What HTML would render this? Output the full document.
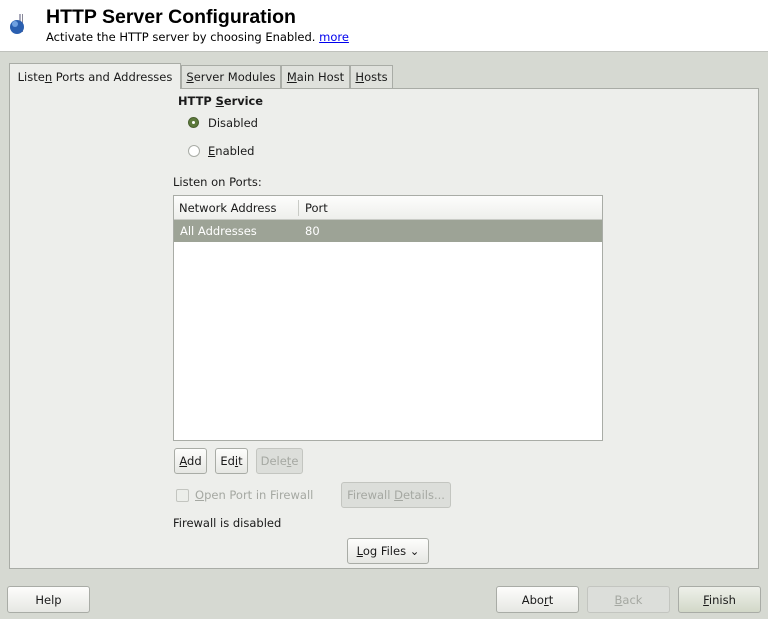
<!DOCTYPE html><html><head><style>
body{margin:0;width:768px;height:619px;background:#d6d9d2;font-family:"DejaVu Sans",sans-serif;font-size:11.5px;color:#1a1a1a;position:relative;overflow:hidden}
.a{position:absolute}
u{text-decoration:underline}
.btn{position:absolute;border:1px solid #a9aca6;border-radius:3px;background:linear-gradient(#fdfdfc,#e6e7e3);text-align:center;box-sizing:border-box;line-height:24px;font-size:11.5px}
.dis{color:#a5a8a2;background:#dcdeda;border-color:#c3c5c0}
.tab{position:absolute;top:65px;height:23px;border:1px solid #a9aca6;border-bottom:none;background:#dfe1dc;box-sizing:border-box;line-height:22px;text-align:center;font-size:11.5px;white-space:nowrap}
</style></head><body>
<div class="a" style="left:0;top:0;width:768px;height:51px;background:#fff;border-bottom:1px solid #bfc1bc"></div>
<svg class="a" style="left:8px;top:12px" width="20" height="24"><rect x="11" y="2" width="2" height="18" fill="#aab"/><rect x="14" y="2" width="1" height="18" fill="#889"/><circle cx="9" cy="15" r="7" fill="#2a5fb0"/><circle cx="7" cy="12" r="3" fill="#6fa0e0"/></svg>
<div class="a" style="left:46px;top:6px;font-family:'Liberation Sans',sans-serif;font-size:19.5px;font-weight:bold;color:#000">HTTP Server Configuration</div>
<div class="a" style="left:46px;top:30px;color:#000;white-space:nowrap">Activate the HTTP server by choosing Enabled. <span style="color:#00e;text-decoration:underline">more</span></div>
<div class="a" style="left:9px;top:88px;width:750px;height:481px;box-sizing:border-box;border:1px solid #a9aca6;background:#edeeeb"></div>
<div class="tab" style="left:9px;width:172px;top:63px;height:26px;background:#edeeeb;line-height:26px">Liste<u>n</u> Ports and Addresses</div>
<div class="tab" style="left:181px;width:100px"><u>S</u>erver Modules</div>
<div class="tab" style="left:281px;width:69px"><u>M</u>ain Host</div>
<div class="tab" style="left:350px;width:43px"><u>H</u>osts</div>
<div class="a" style="left:178px;top:94px;font-weight:bold;font-size:11.4px;white-space:nowrap">HTTP <u>S</u>ervice</div>
<div class="a" style="left:188px;top:117px;width:11px;height:11px;border-radius:50%;background:#5d7a3c;border:1px solid #4a6030;box-sizing:border-box"><div style="margin:3px;width:3px;height:3px;border-radius:50%;background:#fff"></div></div>
<div class="a" style="left:208px;top:116px">Disabled</div>
<div class="a" style="left:188px;top:145px;width:12px;height:12px;border-radius:50%;background:#fff;border:1px solid #a9aca6;box-sizing:border-box"></div>
<div class="a" style="left:208px;top:144px"><u>E</u>nabled</div>
<div class="a" style="left:173px;top:175px">Listen on Ports:</div>
<div class="a" style="left:173px;top:195px;width:430px;height:246px;box-sizing:border-box;border:1px solid #a9aca6;background:#fff"></div>
<div class="a" style="left:174px;top:196px;width:428px;height:23px;background:linear-gradient(#fdfdfc,#eeefec);border-bottom:1px solid #c9cbc6"></div>
<div class="a" style="left:298px;top:200px;width:1px;height:16px;background:#c9cbc6"></div>
<div class="a" style="left:179px;top:201px">Network Address</div>
<div class="a" style="left:305px;top:201px">Port</div>
<div class="a" style="left:174px;top:220px;width:428px;height:22px;background:#9da396"></div>
<div class="a" style="left:180px;top:224px;color:#fff">All Addresses</div>
<div class="a" style="left:305px;top:224px;color:#fff">80</div>
<div class="btn" style="left:174px;top:448px;width:33px;height:26px"><u>A</u>dd</div>
<div class="btn" style="left:215px;top:448px;width:33px;height:26px">Ed<u>i</u>t</div>
<div class="btn dis" style="left:256px;top:448px;width:47px;height:26px">Dele<u>t</u>e</div>
<div class="a" style="left:176px;top:489px;width:11px;height:11px;border:1px solid #c3c5c0;border-radius:2px;background:#eceeea"></div>
<div class="a" style="left:195px;top:488px;color:#a5a8a2;white-space:nowrap"><u>O</u>pen Port in Firewall</div>
<div class="btn dis" style="left:341px;top:482px;width:110px;height:26px;white-space:nowrap">Firewall <u>D</u>etails...</div>
<div class="a" style="left:173px;top:516px">Firewall is disabled</div>
<div class="btn" style="left:347px;top:538px;width:82px;height:26px"><u>L</u>og Files &#8964;</div>
<div class="btn" style="left:7px;top:586px;width:83px;height:27px;line-height:26px">Help</div>
<div class="btn" style="left:496px;top:586px;width:83px;height:27px;line-height:26px">Abo<u>r</u>t</div>
<div class="btn dis" style="left:587px;top:586px;width:83px;height:27px;line-height:26px"><u>B</u>ack</div>
<div class="btn" style="left:678px;top:586px;width:83px;height:27px;line-height:26px;background:linear-gradient(#eef0ea,#d2d8c8)"><u>F</u>inish</div>
</body></html>
